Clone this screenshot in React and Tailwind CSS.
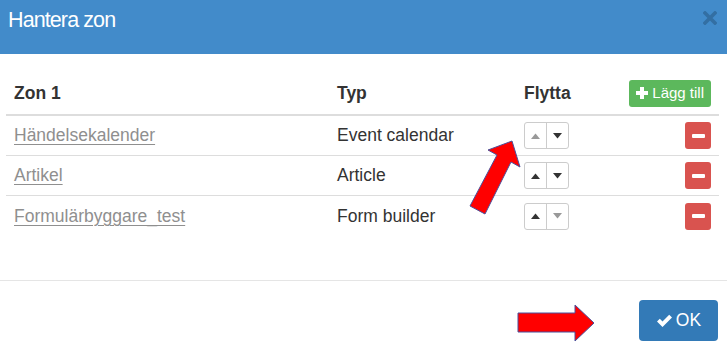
import React from 'react';

const ROWS = [
  { name: 'Händelsekalender', type: 'Event calendar', up: false, down: true },
  { name: 'Artikel', type: 'Article', up: true, down: true },
  { name: 'Formulärbyggare_test', type: 'Form builder', up: true, down: false },
];

function Caret({ dir, on }) {
  return (
    <svg width="9" height="6" viewBox="0 0 9 6">
      {dir === 'up'
        ? <polygon points="0,6 4.5,0.5 9,6" fill={on ? '#333' : '#999'} />
        : <polygon points="0,0 9,0 4.5,5.5" fill={on ? '#333' : '#999'} />}
    </svg>
  );
}

function Row({ row, last }) {
  return (
    <div className={`flex h-[40px] items-center ${last ? '' : 'border-b border-[#ddd]'}`}>
      <div className="w-[323px] pl-2">
        <a className="text-[#8f8f8f] underline decoration-1 underline-offset-[3px]">{row.name}</a>
      </div>
      <div className="w-[187px] pl-2 text-[#333]">{row.type}</div>
      <div className="w-[100px] pl-2">
        <div className="flex h-[27px] w-[45px] rounded-[3px] border border-[#ccc]">
          <div className="flex w-[22px] items-center justify-center border-r border-[#ccc]">
            <Caret dir="up" on={row.up} />
          </div>
          <div className="flex flex-1 items-center justify-center">
            <Caret dir="down" on={row.down} />
          </div>
        </div>
      </div>
      <div className="flex flex-1 justify-end pr-2">
        <button className="flex h-[27px] w-[26px] items-center justify-center rounded-[3px] bg-[#d9534f]">
          <span className="block h-[4px] w-[13px] rounded-[1px] bg-white" />
        </button>
      </div>
    </div>
  );
}

export default function App() {
  return (
    <div className="relative h-[347px] w-[727px] overflow-hidden bg-white font-['Liberation_Sans',Arial,sans-serif] text-[17.5px]">
      {/* Header */}
      <div className="flex h-[54px] items-start justify-between bg-[#428bca] pl-[8px] pr-[10px] pt-[8px]">
        <h4 className="text-[21.5px] leading-[24px] tracking-[-0.9px] text-white">Hantera zon</h4>
        <svg className="mt-[3px]" width="14" height="14" viewBox="0 0 14 14">
          <path d="M2 2 L12 12 M12 2 L2 12" stroke="#336fa3" strokeWidth="3.6" strokeLinecap="square" />
        </svg>
      </div>

      {/* Body */}
      <div className="h-[226px] px-[6px] pt-[20px] pr-[8px]">
        <div className="flex h-[42px] items-center border-b-2 border-[#ddd] pb-[2px] font-bold text-[#333]">
          <div className="w-[323px] pl-2">Zon 1</div>
          <div className="w-[187px] pl-2">Typ</div>
          <div className="w-[100px] pl-2">Flytta</div>
          <div className="flex flex-1 justify-end pr-2">
            <button className="flex h-[27px] items-center gap-[4px] rounded-[3px] bg-[#5cb85c] pl-[7px] pr-[7px] text-[15px] font-normal text-white">
              <svg width="12" height="12" viewBox="0 0 12 12">
                <rect x="4" y="0" width="4" height="12" fill="#fff" />
                <rect x="0" y="4" width="12" height="4" fill="#fff" />
              </svg>
              Lägg till
            </button>
          </div>
        </div>
        {ROWS.map((r, i) => (
          <Row key={r.name} row={r} last={i === ROWS.length - 1} />
        ))}
      </div>

      {/* Footer */}
      <div className="flex justify-end border-t border-[#e5e5e5] pr-[9px] pt-[19px]">
        <button className="flex h-[41px] w-[79px] items-center justify-center gap-[3px] rounded-[4px] bg-[#337ab7] text-[17.5px] text-white">
          <svg width="17" height="14" viewBox="0 0 17 14">
            <path d="M1 7.5 L3.8 4.8 L6.5 7.4 L13.2 0.8 L16 3.6 L6.5 13 Z" fill="#fff" />
          </svg>
          OK
        </button>
      </div>

      {/* Annotation arrows */}
      <svg className="pointer-events-none absolute left-0 top-0" width="727" height="347">
        <polygon
          points="512,141 520,167 511,162 485,214 470,206 497,155 488,150"
          fill="#ff0000" stroke="#4b4f9a" strokeWidth="1" strokeLinejoin="miter"
        />
        <polygon
          points="518,313 575,313 575,305 594,323 575,341 575,332 518,332"
          fill="#ff0000" stroke="#4b4f9a" strokeWidth="1"
        />
      </svg>
    </div>
  );
}
